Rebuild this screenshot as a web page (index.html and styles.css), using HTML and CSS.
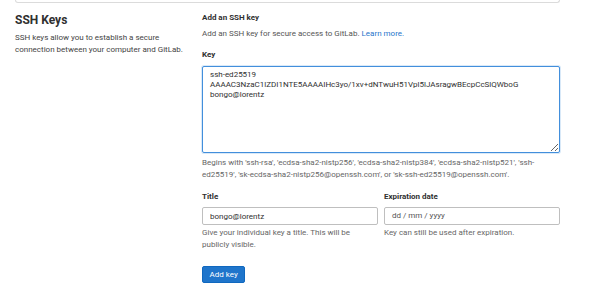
FILE: index.html
```html
<!DOCTYPE html>
<html lang="en">
<head>
  <meta charset="UTF-8" />
  <meta name="viewport" content="width=device-width, initial-scale=1.0" />
  <title>SSH Keys</title>
  <link rel="stylesheet" href="styles.css">
</head>
<body>
  <div class="page">
    <div class="prev-box"></div>
    <div class="settings">
      <div class="intro">
        <h2>SSH Keys</h2>
        <p>SSH keys allow you to establish a secure connection between your computer and GitLab.</p>
      </div>
      <form class="key-form">
        <h5>Add an SSH key</h5>
        <p class="lead">Add an SSH key for secure access to GitLab. <a href="#">Learn more.</a></p>
        <label class="label key-label" for="key">Key</label>
        <textarea id="key" class="key-input">ssh-ed25519
AAAAC3NzaC1lZDI1NTE5AAAAIHc3yo/1xv+dNTwuH51Vpl5lJAsragwBEcpCcSlQWboG
bongo@lorentz</textarea>
        <p class="help">Begins with 'ssh-rsa', 'ecdsa-sha2-nistp256', 'ecdsa-sha2-nistp384', 'ecdsa-sha2-nistp521', 'ssh-ed25519', 'sk-ecdsa-sha2-nistp256@openssh.com', or 'sk-ssh-ed25519@openssh.com'.</p>
        <div class="row">
          <div class="field">
            <label class="label" for="title">Title</label>
            <input id="title" class="input" type="text" value="bongo@lorentz">
            <p class="help">Give your individual key a title. This will be publicly visible.</p>
          </div>
          <div class="field">
            <label class="label" for="expires">Expiration date</label>
            <div class="input placeholder">dd / mm / yyyy</div>
            <p class="help">Key can still be used after expiration.</p>
          </div>
        </div>
        <button class="btn" type="button">Add key</button>
      </form>
    </div>
  </div>
</body>
</html>
```

FILE: styles.css
```css
* {
  margin: 0;
  padding: 0;
  box-sizing: border-box;
}
body {
  font-family: Roboto, "Liberation Sans", sans-serif;
  background: #fff;
  color: #303030;
}
.page {
  padding: 0 40px 0 15px;
}
.prev-box {
  height: 3px;
  border: 1px solid #dbdbdb;
  border-top: none;
  border-radius: 0 0 3px 3px;
}
.settings {
  display: grid;
  grid-template-columns: 187px 1fr;
  padding-top: 8px;
}
.intro {
  padding-right: 12px;
}
.intro h2 {
  font-size: 12px;
  font-weight: 700;
  color: #303030;
  line-height: 14px;
  margin-top: 2px;
}
.intro p {
  font-size: 8px;
  line-height: 12.5px;
  color: #444;
  margin-top: 4.5px;
}
.key-form h5 {
  font-size: 8px;
  font-weight: 700;
  line-height: 12px;
  margin-top: 0.5px;
}
.lead {
  font-size: 8px;
  line-height: 12px;
  color: #555;
  margin-top: 4px;
}
.lead a {
  color: #1f75cb;
  text-decoration: none;
}
.label {
  display: block;
  font-size: 8px;
  font-weight: 700;
  line-height: 12px;
  margin-bottom: 4px;
}
.key-label {
  margin-top: 9px;
  margin-bottom: 5.5px;
}
.key-input {
  display: block;
  width: 100%;
  height: 87px;
  border: 1px solid #428fdc;
  border-radius: 2px;
  box-shadow: 0 0 0 1px rgba(66, 143, 220, 0.2);
  padding: 2.5px 7px;
  font-family: Roboto, "Liberation Sans", sans-serif;
  font-size: 8px;
  line-height: 10px;
  color: #303030;
  resize: vertical;
  outline: none;
}
.help {
  font-size: 8px;
  line-height: 12px;
  color: #666;
  margin-top: 4px;
}
.row {
  display: grid;
  grid-template-columns: 1fr 1fr;
  gap: 6px;
  margin-top: 10px;
}
.row .help {
  margin-top: 2px;
}
.input {
  display: block;
  width: 100%;
  height: 18px;
  border: 1px solid #bfbfbf;
  border-radius: 2px;
  padding: 0 7px;
  font-family: Roboto, "Liberation Sans", sans-serif;
  font-size: 8px;
  color: #303030;
  line-height: 16px;
}
.placeholder {
  color: #555;
}
.btn {
  margin-top: 14.5px;
  background: #1f75cb;
  color: #fff;
  border: 1px solid #1068bf;
  border-radius: 2px;
  font-family: Roboto, "Liberation Sans", sans-serif;
  font-size: 8px;
  height: 17px;
  padding: 0 6.5px;
  cursor: pointer;
}
```
